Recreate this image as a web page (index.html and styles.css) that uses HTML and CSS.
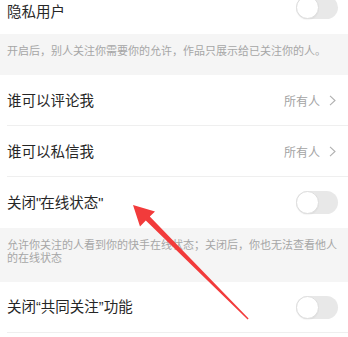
FILE: index.html
```html
<!DOCTYPE html>
<html lang="zh-CN">
<head>
<meta charset="utf-8">
<link rel="stylesheet" href="styles.css">
</head>
<body>
<div class="list">
  <div class="row row-first">
    <span class="title">隐私用户</span>
    <span class="toggle toggle-first"><span class="knob"></span></span>
  </div>
  <div class="desc">开启后，别人关注你需要你的允许，作品只展示给已关注你的人。</div>
  <div class="row">
    <span class="title">谁可以评论我</span>
    <span class="value">所有人<svg class="chev" width="7" height="11" viewBox="0 0 7 11"><path d="M1 0.8 L6 5.5 L1 10.2" fill="none" stroke="#b0b0b0" stroke-width="1.1"/></svg></span>
  </div>
  <div class="row">
    <span class="title">谁可以私信我</span>
    <span class="value">所有人<svg class="chev" width="7" height="11" viewBox="0 0 7 11"><path d="M1 0.8 L6 5.5 L1 10.2" fill="none" stroke="#b0b0b0" stroke-width="1.1"/></svg></span>
  </div>
  <div class="row row-plain">
    <span class="title">关闭<span class="q sq">"</span>在线状态<span class="q sq">"</span></span>
    <span class="toggle"><span class="knob"></span></span>
  </div>
  <div class="desc">允许你关注的人看到你的快手在线状态；关闭后，你也无法查看他人的在线状态</div>
  <div class="row">
    <span class="title">关闭<span class="q">“</span>共同关注<span class="q">”</span>功能</span>
    <span class="toggle"><span class="knob"></span></span>
  </div>
</div>
<svg class="arrow" width="348" height="337" viewBox="0 0 348 337">
  <polygon points="133,205 155,211.5 149.8,216.6 248.6,318.4 247.6,319.4 145.8,220.4 140,226.5" fill="#f23b3b"/>
</svg>
</body>
</html>
```
FILE: styles.css
```css
html, body {
  margin: 0;
  padding: 0;
  background: #ffffff;
}
body {
  position: relative;
  width: 348px;
  height: 337px;
  overflow: hidden;
  font-family: "Noto Sans CJK SC", "Noto Sans", sans-serif;
}
.list {
  margin-top: -12px;
  display: flex;
  flex-direction: column;
}
.row {
  height: 51px;
  margin-left: 7px;
  padding-right: 10px;
  display: flex;
  align-items: center;
  justify-content: space-between;
  border-bottom: 1px solid #efefef;
  box-sizing: border-box;
}
.row-plain {
  border-bottom: none;
}
.row-first {
  height: 46px;
  border-bottom: none;
}
.title {
  font-size: 14.5px;
  color: #262626;
  line-height: 1;
}
.q {
  font-family: "Liberation Sans", sans-serif;
}
.sq {
  letter-spacing: -1px;
}
.value {
  display: flex;
  align-items: center;
  gap: 9px;
  font-size: 12px;
  color: #a3a3a3;
  margin-right: 2px;
}
.toggle {
  width: 42px;
  height: 23px;
  border-radius: 12px;
  background: #e8e8e8;
  position: relative;
  display: block;
}
.toggle-first {
  margin-bottom: 8px;
}
.knob {
  position: absolute;
  left: 0;
  top: 0;
  width: 23px;
  height: 23px;
  border-radius: 50%;
  background: #ffffff;
  box-sizing: border-box;
  border: 1px solid #dedede;
  box-shadow: 0 1px 1px rgba(0, 0, 0, 0.04);
}
.desc {
  background: #f5f5f5;
  padding: 10px 7px 18px;
  font-size: 11px;
  line-height: 13px;
  color: #a6a6a6;
}
.arrow {
  position: absolute;
  left: 0;
  top: 0;
  pointer-events: none;
}
```
